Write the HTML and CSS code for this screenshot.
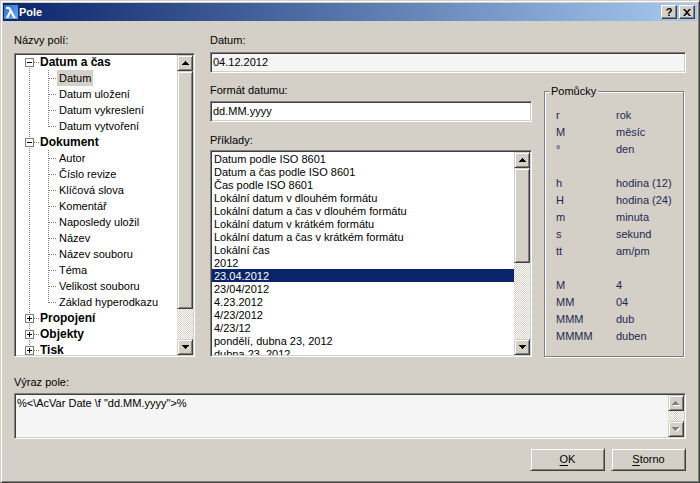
FILE: index.html
```html
<!DOCTYPE html>
<html lang="cs">
<head>
<meta charset="utf-8">
<title>Pole</title>
<link rel="stylesheet" href="styles.css">
</head>
<body>
<div class="window">
  <div class="titlebar">
    <svg class="appicon" width="14" height="14" viewBox="0 0 14 14">
      <defs><linearGradient id="ig" x1="0" y1="0" x2="1" y2="1"><stop offset="0" stop-color="#2f6fd0"/><stop offset="1" stop-color="#6fa8ea"/></linearGradient></defs>
      <rect width="14" height="14" fill="url(#ig)"/>
      <path d="M2 2.2C4.5 1.2 6.2 2 7.2 4.2L11.8 13H9.2L6.6 7.8 4.4 13H2L5.6 5.6C5 4.2 4 3.8 2 4.2Z" fill="#fff"/>
    </svg>
    <span class="title">Pole</span>
    <div class="tbtns">
      <span class="tbtn help">?</span>
      <span class="tbtn"><svg width="8" height="7" viewBox="0 0 8 7"><path d="M0 0h2l2 2.2L6 0h2L5 3.5 8 7H6L4 4.8 2 7H0l3-3.5z" fill="#000"/></svg></span>
    </div>
  </div>

  <div class="body">
    <div class="main">
      <div class="leftcol">
        <div class="label">Názvy polí:</div>
        <div class="tree sunken">
          <div class="tree-items">
            <div class="node parent first"><span class="exp"></span><span class="ptext">Datum a čas</span></div>
            <div class="node child"><span class="ctext sel">Datum</span></div>
            <div class="node child"><span class="ctext">Datum uložení</span></div>
            <div class="node child"><span class="ctext">Datum vykreslení</span></div>
            <div class="node child last"><span class="ctext">Datum vytvoření</span></div>
            <div class="node parent"><span class="exp"></span><span class="ptext">Dokument</span></div>
            <div class="node child"><span class="ctext">Autor</span></div>
            <div class="node child"><span class="ctext">Číslo revize</span></div>
            <div class="node child"><span class="ctext">Klíčová slova</span></div>
            <div class="node child"><span class="ctext">Komentář</span></div>
            <div class="node child"><span class="ctext">Naposledy uložil</span></div>
            <div class="node child"><span class="ctext">Název</span></div>
            <div class="node child"><span class="ctext">Název souboru</span></div>
            <div class="node child"><span class="ctext">Téma</span></div>
            <div class="node child"><span class="ctext">Velikost souboru</span></div>
            <div class="node child last"><span class="ctext">Základ hyperodkazu</span></div>
            <div class="node parent"><span class="exp plus"></span><span class="ptext">Propojení</span></div>
            <div class="node parent"><span class="exp plus"></span><span class="ptext">Objekty</span></div>
            <div class="node parent"><span class="exp plus"></span><span class="ptext">Tisk</span></div>
          </div>
          <div class="vscroll">
            <div class="sbtn"><svg width="7" height="4" viewBox="0 0 7 4"><path d="M3 0h1v1h1v1h1v1h1v1H0V3h1V2h1V1h1z" fill="#000"/></svg></div>
            <div class="thumb tree-thumb"></div>
            <div class="track"></div>
            <div class="sbtn"><svg width="7" height="4" viewBox="0 0 7 4"><path d="M0 0h7v1H6v1H5v1H4v1H3V3H2V2H1V1H0z" fill="#000"/></svg></div>
          </div>
        </div>
      </div>

      <div class="rightcol">
        <div class="label">Datum:</div>
        <div class="field readonly sunken">04.12.2012</div>
        <div class="lower">
          <div class="formcol">
            <div class="label">Formát datumu:</div>
            <div class="field fmt sunken">dd.MM.yyyy</div>
            <div class="label lab-ex">Příklady:</div>
            <div class="list sunken">
              <div class="list-items">
                <div class="li">Datum podle ISO 8601</div>
                <div class="li">Datum a čas podle ISO 8601</div>
                <div class="li">Čas podle ISO 8601</div>
                <div class="li">Lokální datum v dlouhém formátu</div>
                <div class="li">Lokální datum a čas v dlouhém formátu</div>
                <div class="li">Lokální datum v krátkém formátu</div>
                <div class="li">Lokální datum a čas v krátkém formátu</div>
                <div class="li">Lokální čas</div>
                <div class="li">2012</div>
                <div class="li selected">23.04.2012</div>
                <div class="li">23/04/2012</div>
                <div class="li">4.23.2012</div>
                <div class="li">4/23/2012</div>
                <div class="li">4/23/12</div>
                <div class="li">pondělí, dubna 23, 2012</div>
                <div class="li">dubna 23, 2012</div>
              </div>
              <div class="vscroll">
                <div class="sbtn"><svg width="7" height="4" viewBox="0 0 7 4"><path d="M3 0h1v1h1v1h1v1h1v1H0V3h1V2h1V1h1z" fill="#000"/></svg></div>
                <div class="thumb list-thumb"></div>
                <div class="track"></div>
                <div class="sbtn"><svg width="7" height="4" viewBox="0 0 7 4"><path d="M0 0h7v1H6v1H5v1H4v1H3V3H2V2H1V1H0z" fill="#000"/></svg></div>
              </div>
            </div>
          </div>
          <fieldset class="group">
            <legend>Pomůcky</legend>
            <div class="hints">
              <span>r</span><span>rok</span>
              <span>M</span><span>měsíc</span>
              <span>°</span><span>den</span>
              <span class="gap"></span><span class="gap"></span>
              <span>h</span><span>hodina (12)</span>
              <span>H</span><span>hodina (24)</span>
              <span>m</span><span>minuta</span>
              <span>s</span><span>sekund</span>
              <span>tt</span><span>am/pm</span>
              <span class="gap"></span><span class="gap"></span>
              <span>M</span><span>4</span>
              <span>MM</span><span>04</span>
              <span>MMM</span><span>dub</span>
              <span>MMMM</span><span>duben</span>
            </div>
          </fieldset>
        </div>
      </div>
    </div>

    <div class="label expr-label">Výraz pole:</div>
    <div class="expr sunken">
      <div class="expr-text">%&lt;\AcVar Date \f "dd.MM.yyyy"&gt;%</div>
      <div class="vscroll">
        <div class="sbtn"><svg width="8" height="5" viewBox="0 0 8 5"><path d="M4 1h1v1h1v1h1v1h1v1H1V4h1V3h1V2h1z" fill="#fff"/><path d="M3 0h1v1h1v1h1v1h1v1H0V3h1V2h1V1h1z" fill="#808080"/></svg></div>
        <div class="track"></div>
        <div class="sbtn"><svg width="8" height="5" viewBox="0 0 8 5"><path d="M1 1h7v1H7v1H6v1H5v1H4V4H3V3H2V2H1z" fill="#fff"/><path d="M0 0h7v1H6v1H5v1H4v1H3V3H2V2H1V1H0z" fill="#808080"/></svg></div>
      </div>
    </div>

    <div class="buttons">
      <div class="btn"><u>O</u>K</div>
      <div class="btn"><u>S</u>torno</div>
    </div>
  </div>
</div>
</body>
</html>
```

FILE: styles.css
```css
* { box-sizing: border-box; }
html, body { margin: 0; padding: 0; }
body {
  width: 700px;
  height: 483px;
  overflow: hidden;
  font-family: "Liberation Sans", Arial, sans-serif;
  font-size: 11px;
  color: #000;
  --vdot: repeating-linear-gradient(to bottom, #808080 0 1px, transparent 1px 2px);
  --hdot: repeating-linear-gradient(to right, #808080 0 1px, transparent 1px 2px);
  --dither: repeating-conic-gradient(#ffffff 0 25%, #d4d0c8 0 50%);
}

.window {
  width: 700px;
  height: 483px;
  background: #d4d0c8;
  border: 1px solid;
  border-color: #d4d0c8 #404040 #404040 #d4d0c8;
  box-shadow: inset 1px 1px #fff, inset -1px -1px #808080;
  padding: 2px;
  display: flex;
  flex-direction: column;
}

/* title bar */
.titlebar {
  height: 18px;
  background: linear-gradient(to right, #0a246a, #a6caf0);
  display: flex;
  align-items: center;
  padding: 0 2px 0 1px;
}
.appicon { display: block; flex: none; }
.title {
  color: #fff;
  font-weight: bold;
  margin-left: 1px;
  line-height: 18px;
  flex: 1;
}
.tbtns { display: flex; gap: 2px; }
.tbtn {
  width: 16px;
  height: 14px;
  background: #d4d0c8;
  border: 1px solid;
  border-color: #fff #404040 #404040 #fff;
  box-shadow: inset -1px -1px #808080;
  display: flex;
  align-items: center;
  justify-content: center;
  font-weight: bold;
  font-size: 11px;
  line-height: 12px;
}
.tbtn svg { display: block; }

/* body */
.body {
  flex: 1;
  padding: 13px 11px 0 11px;
  display: flex;
  flex-direction: column;
}
.label { line-height: 13px; height: 13px; white-space: nowrap; }

.sunken {
  border: 1px solid;
  border-color: #808080 #fff #fff #808080;
  box-shadow: inset 1px 1px #404040, inset -1px -1px #d4d0c8;
  padding: 1px;
}

.main { display: flex; gap: 15px; height: 323px; }
.leftcol { width: 181px; flex: none; display: flex; flex-direction: column; }
.tree {
  margin-top: 6px;
  height: 304px;
  background: #fff;
  display: flex;
  overflow: hidden;
}
.tree-items { flex: 1; overflow: hidden; padding-top: 0; margin-top: -1px; }

.node {
  height: 16px;
  display: flex;
  line-height: 16px;
  white-space: nowrap;
  background: var(--vdot) 13px 0 / 1px 100% no-repeat;
}
.node.parent {
  background:
    var(--hdot) 18px 8px / 6px 1px no-repeat,
    var(--vdot) 13px 0 / 1px 100% no-repeat;
}
.node.parent.first {
  background:
    var(--hdot) 18px 8px / 6px 1px no-repeat,
    var(--vdot) 13px 8px / 1px 8px no-repeat;
}
.node.child {
  background:
    var(--hdot) 33px 8px / 8px 1px no-repeat,
    var(--vdot) 32px 0 / 1px 100% no-repeat,
    var(--vdot) 13px 0 / 1px 100% no-repeat;
}
.node.child.last {
  background:
    var(--hdot) 33px 8px / 8px 1px no-repeat,
    var(--vdot) 32px 0 / 1px 9px no-repeat,
    var(--vdot) 13px 0 / 1px 100% no-repeat;
}
.exp {
  width: 9px;
  height: 9px;
  margin: 4px 0 0 9px;
  border: 1px solid #808080;
  background: linear-gradient(#000, #000) center / 5px 1px no-repeat, #fff;
  flex: none;
}
.exp.plus {
  background:
    linear-gradient(#000, #000) center / 5px 1px no-repeat,
    linear-gradient(#000, #000) center / 1px 5px no-repeat,
    #fff;
}
.ptext { font-weight: bold; font-size: 12px; margin-left: 6px; }
.ctext { margin-left: 41px; padding: 0 2px; }
.ctext.sel { background: #d4d0c8; }

/* scrollbars */
.vscroll {
  width: 16px;
  flex: none;
  display: flex;
  flex-direction: column;
}
.sbtn, .thumb, .btn {
  background: #d4d0c8;
  border: 1px solid;
  border-color: #d4d0c8 #404040 #404040 #d4d0c8;
  box-shadow: inset 1px 1px #fff, inset -1px -1px #808080;
}
.sbtn {
  height: 16px;
  flex: none;
  display: flex;
  align-items: center;
  justify-content: center;
}
.sbtn svg { display: block; }
.tree-thumb { height: 238px; flex: none; }
.list-thumb { height: 95px; flex: none; }
.track { flex: 1; background: var(--dither); background-size: 2px 2px; }

/* right column */
.rightcol { flex: 1; display: flex; flex-direction: column; }
.field {
  height: 21px;
  margin-top: 5px;
  padding: 1px 2px;
  line-height: 17px;
  white-space: nowrap;
}
.field.readonly { background: #f5f5f5; }
.field.fmt { background: #fff; margin-top: 4px; }
.lower { display: flex; gap: 12px; margin-top: 11px; flex: 1; }
.formcol { width: 322px; flex: none; display: flex; flex-direction: column; }
.lab-ex { margin-top: 12px; }
.list {
  margin-top: 3px;
  height: 207px;
  background: #fff;
  display: flex;
  overflow: hidden;
}
.list-items { flex: 1; overflow: hidden; }
.li { height: 13px; line-height: 14px; padding-left: 2px; white-space: nowrap; }
.li.selected { background: #0a246a; color: #fff; }

.group {
  margin: 0 2px 0 0;
  padding: 0;
  flex: 1;
  height: 273px;
  border: 1px solid #808080;
  box-shadow: inset 1px 1px #fff, 1px 1px #fff;
  min-width: 0;
}
.group legend {
  margin-left: 4px;
  padding: 0 2px;
  line-height: 15px;
  background: #d4d0c8;
}
.hints {
  display: grid;
  grid-template-columns: 60px 1fr;
  grid-auto-rows: 17px;
  padding: 8px 0 0 11px;
  line-height: 17px;
  color: #1e2850;
}

/* bottom */
.expr-label { margin-top: 19px; }
.expr {
  margin-top: 4px;
  height: 46px;
  background: #f5f5f5;
  display: flex;
}
.expr-text { flex: 1; padding: 2px 1px; line-height: 13px; white-space: nowrap; }
.buttons {
  display: flex;
  justify-content: flex-end;
  gap: 6px;
  margin-top: 9px;
}
.btn {
  width: 75px;
  height: 23px;
  display: flex;
  align-items: center;
  justify-content: center;
  line-height: 13px;
}
.btn u { text-decoration-thickness: 1px; text-underline-offset: 2px; }
```
